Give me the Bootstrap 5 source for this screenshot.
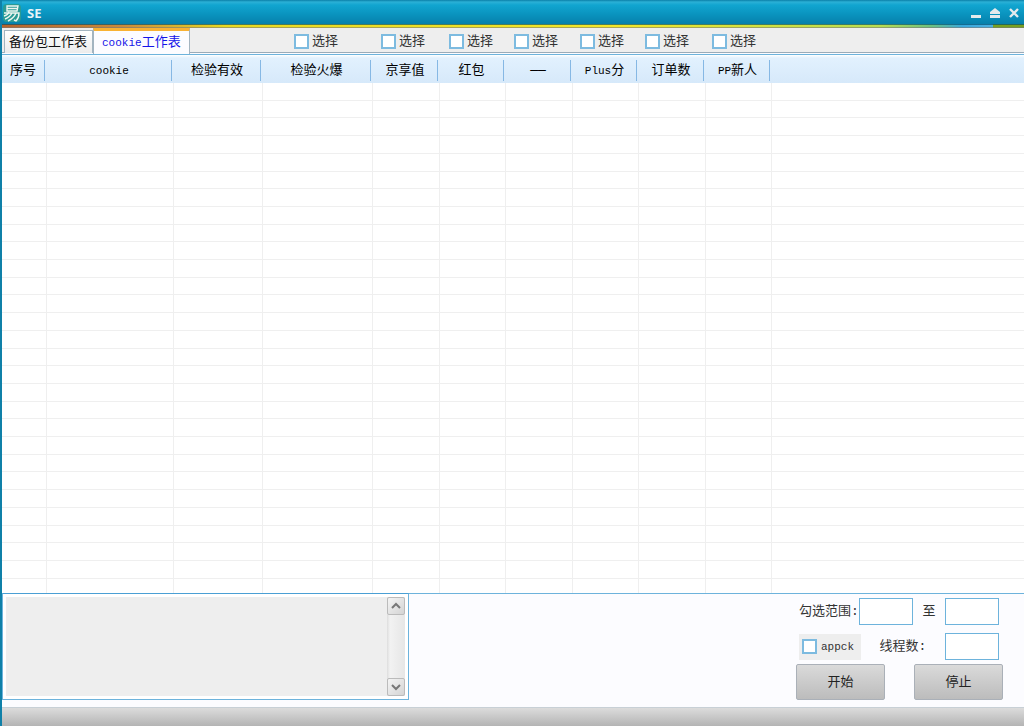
<!DOCTYPE html>
<html lang="zh-CN">
<head>
<meta charset="utf-8">
<meta name="viewport" content="width=device-width, initial-scale=1">
<title>SE</title>
<link href="https://cdn.jsdelivr.net/npm/bootstrap@5.3.0/dist/css/bootstrap.min.css" rel="stylesheet">
<style>
body{font-family:"Liberation Mono","Noto Sans CJK SC",monospace;font-size:13px;line-height:16px;color:#333;background:#fcfcff}
.lat{font-size:11px}
.window{border-left:2px solid #0f80a8}
.titlebar{height:24px;margin-left:-2px;padding:2px 1px 0 3px;background:linear-gradient(#0a7fa8 0,#2bb0d6 2px,#11a5d0 5px,#0a94bf 14px,#0680ab);color:#e8f4f8}
.title-text{font:bold 13px/16px "Open Sans",sans-serif;margin-left:6px}
.win-btn{border:0;background:none;padding:0;width:19px;height:16px;line-height:0}
.accent{height:4px;margin-left:-2px;background:linear-gradient(#005070b0 0 1px,transparent 1px 3px,#77777790 3px),linear-gradient(90deg,#b5622c 0,#c98a3a 12%,#e8d820 22%,#f2e628 60%,#b8dc50 86%,#6cc080 91%,#38a8dc 94%,#4cb0e0 97%,#78a020 97%)}
.strip{height:25px;background:#eee;border-bottom:1px solid #9aabb8}
.tab-list{padding-left:2px}
.tab{border:1px solid #a3b4c0;border-bottom:0;background:linear-gradient(#fff,#ececec);padding:2px 5px 0 4px;color:#111;height:23px;margin-top:2px}
.tab.on{background:#fcfcff;border-top:3px solid #f9b233;color:#1414e8;height:26px;margin-top:0;padding:0 8px}
.choices{position:absolute;left:292px;top:1px;height:25px;display:grid;grid-template-columns:87px 68px 65px 66px 65px 67px 46px;align-items:center}
.pick{display:flex;align-items:center;gap:3px;line-height:18px}
.tick{appearance:none;width:15px;height:15px;margin:0;border:2px solid #7dbbe0;background:#fff;flex:none}
.tick:checked{background:#6db3dc}
.sheet{flex:1 1 0;min-height:0;border-top:1px solid #6db3dc;margin-top:1px;background:#fff;display:flex;overflow:hidden}
.grid-table{table-layout:fixed;width:100%;height:100%;border-collapse:separate;border-spacing:0}
.grid-table th{height:28px;padding:3px 3px 0 0;font-weight:400;text-align:center;background:linear-gradient(#fff 0,#e2f1fe 3px,#d6e9fa);position:relative;color:#000}
.grid-table th:not(:last-child)::after{content:"";position:absolute;right:2px;top:5px;bottom:2px;width:1px;background:#86b8e4}
.grid-table td{padding:0;border-bottom:1px solid #efefef;border-right:1px solid #efefef}
.grid-table td:last-child{border-right:0}
.grid-table tr.tail td{height:14px;border-bottom:0}
.foot{height:114px;border-top:1px solid #6db3dc}
.log{width:407px;height:107px;border:1px solid #6db3dc;border-top-color:#4a9fd4;padding:3px;background:#fff;margin-top:-1px}
.log textarea{border:0;background:#eee;resize:none;overflow:hidden;outline:0}
.bar{width:18px;background:linear-gradient(90deg,#ddd,#f2f2f2 3px,#e6e6e6)}
.bar button{width:18px;height:18px;padding:0;border:1px solid #bbb;border-radius:2px;background:linear-gradient(135deg,#f4f4f4,#d4d4d4);line-height:0}
.controls{width:207px;margin-right:21px;padding-top:4px}
.line{padding:0 4px 0 3px}
.num{width:54px;height:27px;border:1px solid #6db3dc;background:#fff;padding:0 3px;border-radius:0}
.chip{width:62px;height:26px;background:#eee;padding-left:3px}
.act{width:89px;height:36px;border:1px solid #aab0b8;border-radius:2px;padding:2px 0 0;background:linear-gradient(#dadada,#bcbcbc);color:#222}
.status{height:19px;background:linear-gradient(#dcdcdc,#b4b4b4);border-top:1px solid #c8d0d6}
</style>
</head>
<body>
<div class="window vh-100 d-flex flex-column overflow-hidden">
  <header class="titlebar d-flex align-items-center flex-shrink-0">
    <svg width="18" height="18" viewBox="0 0 18 18" aria-hidden="true"><rect width="18" height="18" rx="4" fill="#2b9a94"/><g fill="none" stroke="#eef6f0" stroke-width="1.4"><path d="M4 2h11l-1 5H4zM4 4.500h10M1 9h15q0 5-3 8l-2-1M6 8q-1 3-5 4M9 9q-2 4-7 6M13 9q-2 5-8 8"/></g></svg>
    <span class="title-text">SE</span>
    <div class="ms-auto d-flex">
      <button class="win-btn" aria-label="最小化"><svg width="12" height="12"><path d="M1 8h10v3H1z" fill="#e4eaec"/></svg></button>
      <button class="win-btn" aria-label="最大化"><svg width="12" height="12" fill="#e4eaec"><path d="M6 1l5 4v2H1V5zM1 8h10v3H1z"/></svg></button>
      <button class="win-btn" aria-label="关闭"><svg width="12" height="12"><path d="M2 2l8 8M10 2l-8 8" stroke="#e4eaec" stroke-width="2.400"/></svg></button>
    </div>
  </header>
  <div class="accent flex-shrink-0"></div>
  <div class="strip position-relative flex-shrink-0">
    <div class="tab-list d-flex" role="tablist">
      <button class="tab" role="tab" aria-selected="false">备份包工作表</button>
      <button class="tab on" role="tab" aria-selected="true"><span class="lat">cookie</span>工作表</button>
    </div>
    <div class="choices">
      <label class="pick"><input type="checkbox" class="tick">选择</label>
      <label class="pick"><input type="checkbox" class="tick">选择</label>
      <label class="pick"><input type="checkbox" class="tick">选择</label>
      <label class="pick"><input type="checkbox" class="tick">选择</label>
      <label class="pick"><input type="checkbox" class="tick">选择</label>
      <label class="pick"><input type="checkbox" class="tick">选择</label>
      <label class="pick"><input type="checkbox" class="tick">选择</label>
    </div>
  </div>
  <main class="sheet">
    <table class="grid-table">
      <colgroup><col style="width:45px"><col style="width:127px"><col style="width:89px"><col style="width:110px"><col style="width:67px"><col style="width:66px"><col style="width:67px"><col style="width:66px"><col style="width:67px"><col style="width:66px"><col></colgroup>
      <thead><tr><th>序号</th><th><span class="lat">cookie</span></th><th>检验有效</th><th>检验火爆</th><th>京享值</th><th>红包</th><th>——</th><th><span class="lat">Plus</span>分</th><th>订单数</th><th><span class="lat">PP</span>新人</th><th></th></tr></thead>
      <tbody id="rows"></tbody>
    </table>
  </main>
  <section class="foot d-flex justify-content-between flex-shrink-0">
    <div class="log d-flex">
      <textarea class="flex-grow-1" aria-label="日志" readonly></textarea>
      <div class="bar d-flex flex-column justify-content-between">
        <button aria-label="向上"><svg width="12" height="12"><path d="M2 8l4-4 4 4" fill="none" stroke="#777" stroke-width="2"/></svg></button>
        <button aria-label="向下"><svg width="12" height="12"><path d="M2 4l4 4 4-4" fill="none" stroke="#777" stroke-width="2"/></svg></button>
      </div>
    </div>
    <div class="controls">
      <div class="line d-flex align-items-center mb-2">
        <label for="from">勾选范围:</label><input id="from" class="num"><label for="to" class="mx-auto">至</label><input id="to" class="num">
      </div>
      <div class="line d-flex align-items-center mb-1">
        <label class="chip d-flex align-items-center gap-1"><input type="checkbox" class="tick"><span class="lat">appck</span></label>
        <label for="threads" class="mx-auto">线程数:</label><input id="threads" class="num">
      </div>
      <div class="d-flex justify-content-between">
        <button class="act">开始</button><button class="act">停止</button>
      </div>
    </div>
  </section>
  <footer class="status flex-shrink-0"></footer>
</div>
<script>
const row = '<tr>' + '<td></td>'.repeat(11) + '</tr>';
document.getElementById('rows').innerHTML = row.repeat(28) + row.replace('<tr>', '<tr class="tail">');
</script>
<script src="https://cdn.jsdelivr.net/npm/bootstrap@5.3.0/dist/js/bootstrap.bundle.min.js"></script>
</body>
</html>
